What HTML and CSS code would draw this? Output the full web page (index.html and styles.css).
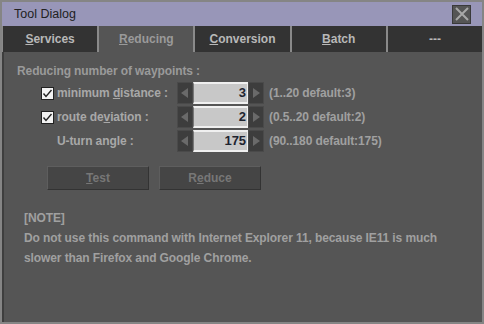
FILE: index.html
```html
<!DOCTYPE html>
<html lang="en">
<head>
    <meta charset="UTF-8">
    <title>Tool Dialog</title>
    <link rel="stylesheet" href="styles.css">
</head>
<body>
    <div class="dialog">
        <div class="titlebar">
            <span class="title">Tool Dialog</span>
            <div class="close">
                <svg width="16" height="16" viewBox="0 0 16 16">
                    <path d="M2 2 L14 14 M14 2 L2 14" stroke="#a8a8a8" stroke-width="2" fill="none"/>
                </svg>
            </div>
        </div>

        <div class="tabs">
            <div class="tab"><u>S</u>ervices</div>
            <div class="tab active"><u>R</u>educing</div>
            <div class="tab"><u>C</u>onversion</div>
            <div class="tab"><u>B</u>atch</div>
            <div class="tab">---</div>
        </div>

        <div class="content">
            <div class="heading">Reducing number of waypoints :</div>

            <div class="row">
                <span class="check"><svg width="11" height="11" viewBox="0 0 11 11"><path d="M1.5 5.5 L4 8.5 L9.5 2" stroke="#222" stroke-width="1.4" fill="none"/></svg></span>
                <span class="label">minimum <u>d</u>istance :</span>
                <div class="spinner">
                    <span class="arrow left"></span>
                    <span class="value">3</span>
                    <span class="arrow right"></span>
                </div>
                <span class="range">(1..20 default:3)</span>
            </div>

            <div class="row">
                <span class="check"><svg width="11" height="11" viewBox="0 0 11 11"><path d="M1.5 5.5 L4 8.5 L9.5 2" stroke="#222" stroke-width="1.4" fill="none"/></svg></span>
                <span class="label">route de<u>v</u>iation :</span>
                <div class="spinner">
                    <span class="arrow left"></span>
                    <span class="value">2</span>
                    <span class="arrow right"></span>
                </div>
                <span class="range">(0.5..20 default:2)</span>
            </div>

            <div class="row">
                <span class="nocheck"></span>
                <span class="label">U-turn angle :</span>
                <div class="spinner">
                    <span class="arrow left"></span>
                    <span class="value">175</span>
                    <span class="arrow right"></span>
                </div>
                <span class="range">(90..180 default:175)</span>
            </div>

            <div class="buttons">
                <button class="button"><u>T</u>est</button>
                <button class="button">R<u>e</u>duce</button>
            </div>

            <div class="note">
                [NOTE]<br>
                Do not use this command with Internet Explorer 11, because IE11 is much<br>
                slower than Firefox and Google Chrome.
            </div>
        </div>
    </div>
</body>
</html>
```

FILE: styles.css
```css
body {
    margin: 0;
    padding: 0;
    font-family: 'Liberation Sans', Arial, sans-serif;
    font-size: 12px;
    background: #808080;
}
.dialog {
    width: 484px;
    height: 324px;
    box-sizing: border-box;
    border: 2px solid #858585;
    background: #555555;
    display: flex;
    flex-direction: column;
}
.titlebar {
    height: 24px;
    background: #9896b8;
    display: flex;
    align-items: center;
    justify-content: space-between;
    padding: 0 11px 0 12px;
}
.title {
    color: #222;
    font-size: 12.5px;
}
.close {
    width: 17px;
    height: 17px;
    background: #555;
    border: 1px solid #3a3a3a;
    display: flex;
    align-items: center;
    justify-content: center;
}
.tabs {
    display: flex;
    gap: 2px;
    padding-left: 1px;
    height: 26px;
    background: #8a8a8a;
}
.tab {
    flex: 1;
    background: #333333;
    color: #b8b8b8;
    font-weight: bold;
    display: flex;
    align-items: center;
    justify-content: center;
}
.tab.active {
    background: #555555;
    color: #9a9a9a;
}
.content {
    flex: 1;
    border-left: 2px solid #3e3e3e;
    padding: 11px 0 0 13px;
    color: #a0a0a0;
    font-weight: bold;
    letter-spacing: -0.1px;
}
.heading {
    color: #9a9a9a;
    height: 16px;
    line-height: 16px;
}
.row {
    display: flex;
    align-items: center;
    height: 24px;
    margin-left: 24px;
}
.heading + .row {
    margin-top: 2px;
}
.check {
    width: 11px;
    height: 11px;
    background: #f2f2f2;
    border: 1px solid #222;
    margin-right: 3px;
    display: flex;
}
.nocheck {
    width: 13px;
    margin-right: 3px;
}
.label {
    width: 120px;
    color: #a8a8a8;
}
.spinner {
    display: flex;
    height: 22px;
}
.arrow {
    width: 14px;
    height: 20px;
    background: #3d3d3d;
    border: 1px solid #4a4a4a;
    position: relative;
}
.arrow::after {
    content: "";
    position: absolute;
    top: 5px;
    border-top: 5px solid transparent;
    border-bottom: 5px solid transparent;
}
.arrow.left::after {
    left: 3px;
    border-right: 7px solid #6a6a6a;
}
.arrow.right::after {
    left: 4px;
    border-left: 7px solid #6a6a6a;
}
.value {
    width: 52px;
    height: 18px;
    line-height: 18px;
    background: #c8c8c8;
    border-top: 2px solid #f0f0f0;
    border-bottom: 2px solid #f0f0f0;
    border-left: 1px solid #777;
    border-right: 1px solid #eee;
    text-align: right;
    padding-right: 1px;
    color: #1e2430;
    font-size: 13px;
}
.range {
    margin-left: 5px;
    color: #a0a0a0;
}
.buttons {
    display: flex;
    gap: 10px;
    margin: 13px 0 0 30px;
}
.button {
    width: 102px;
    height: 24px;
    background: #454545;
    border: 1px solid #333;
    border-top-color: #5e5e5e;
    border-left-color: #5e5e5e;
    color: #777;
    font-family: 'Liberation Sans', Arial, sans-serif;
    font-size: 12px;
    font-weight: bold;
    padding: 0;
}
.note {
    margin: 18px 0 0 7px;
    line-height: 20px;
    color: #a0a0a0;
}
```
